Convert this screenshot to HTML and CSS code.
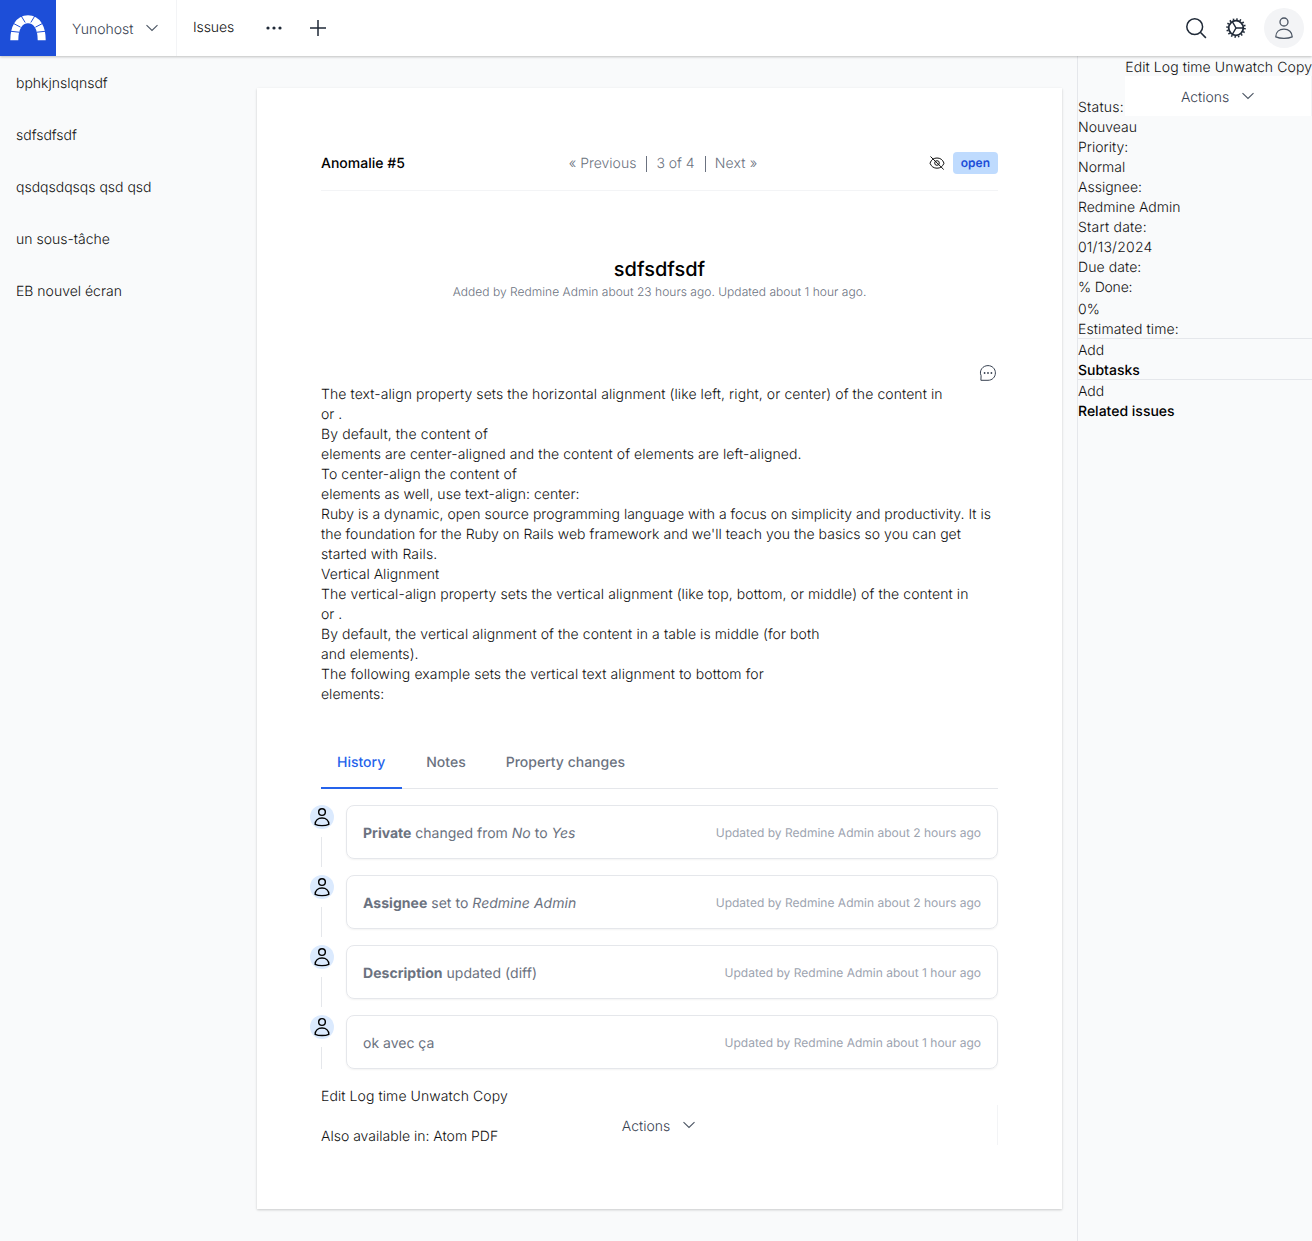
FILE: index.html
```html
<!DOCTYPE html>
<html lang="en">
<head>
<meta charset="utf-8">
<title>Anomalie #5 - Yunohost</title>
<link rel="stylesheet" href="styles.css">
</head>
<body>
<svg class="sprite" aria-hidden="true">
  <symbol id="user" viewBox="0 0 24 24"><circle cx="12" cy="6" r="4"/><path d="M3.800 20.800c0-4.800 3.400-7.600 8.200-7.600s8.200 2.800 8.200 7.600c-2.200 1-5 1.500-8.200 1.500s-6-.5-8.200-1.500z"/></symbol>
  <symbol id="chevron" viewBox="0 0 14 8"><path d="M1.500 1.200 7 6.500l5.500-5.300"/></symbol>
</svg>
<header class="topbar">
  <a class="logo"><svg width="36" height="26" viewBox="0 0 36 26"><path class="arch" d="M4.300 25.200C4.300 13 9 4.300 18 4.300S31.700 13 31.700 25.200"/><path class="joints" d="M0 16.200l9 1M3.200 8.300l7.400 3.900M10.600 0l4.600 7.500M25.400 0l-4.600 7.500M32.800 8.300l-7.400 3.900M36 16.200l-9 1"/></svg></a>
  <a class="project">Yunohost <svg class="chevron"><use href="#chevron"/></svg></a>
  <a class="issues">Issues</a>
  <svg class="dots" width="16" height="4" viewBox="0 0 16 4"><circle cx="2" cy="2" r="1.600"/><circle cx="8" cy="2" r="1.600"/><circle cx="14" cy="2" r="1.600"/></svg>
  <svg class="line-icon plus" width="16" height="16" viewBox="0 0 16 16"><path d="M8 0v16M0 8h16"/></svg>
  <div class="tools">
    <svg class="line-icon" width="22" height="22" viewBox="0 0 22 22"><circle cx="9.700" cy="9.700" r="7.900"/><path d="m15.300 15.300 5.600 5.600"/></svg>
    <svg class="line-icon" width="20" height="20" viewBox="0 0 20 20"><circle class="ring" cx="10" cy="10" r="7.300"/><circle class="teeth" cx="10" cy="10" r="8.900"/><path d="M10 10h7.500M10 10 6.250 3.500M10 10l-3.750 6.500"/></svg>
    <a class="avatar"><svg width="24" height="24"><use href="#user"/></svg></a>
  </div>
</header>
<div class="layout">
  <nav class="issue-list"><a>bphkjnslqnsdf</a><a>sdfsdfsdf</a><a>qsdqsdqsqs qsd qsd</a><a>un sous-tâche</a><a>EB nouvel écran</a></nav>
  <main class="card">
    <div class="card-head">
      <h2>Anomalie #5</h2>
      <div class="pager"><span>« Previous</span><span>3 of 4</span><span>Next »</span></div>
      <div class="state"><svg class="hidden-eye" width="16" height="14" viewBox="0 0 16 14"><path d="M1 7.200C2.300 3.500 4.900 2 8 2s5.700 1.500 7 5.200C13.700 10.700 11.100 12.200 8 12.200S2.300 10.700 1 7.200zM1.500.5l13.200 13"/><circle cx="8" cy="7" r="2.300"/></svg><span class="badge">open</span></div>
    </div>
    <div class="title"><h1>sdfsdfsdf</h1><p>Added by Redmine Admin about 23 hours ago. Updated about 1 hour ago.</p></div>
    <div class="quote"><svg width="18" height="18" viewBox="0 0 18 18"><path class="bubble" d="M1.900 16.300l.2-4.600C-.2 6.600 3.700 1.600 9 1.600c4.200 0 7.400 3.200 7.400 7.300 0 4.200-3.200 7.400-7.400 7.400z"/><circle cx="5.600" cy="9" r=".9"/><circle cx="9" cy="9" r=".9"/><circle cx="12.400" cy="9" r=".9"/></svg></div>
    <div class="description">
      <p class="track-md">The text-align property sets the horizontal alignment (like left, right, or center) of the content in</p>
      <p>or .</p>
      <p class="track-lg">By default, the content of</p>
      <p class="track-md">elements are center-aligned and the content of elements are left-aligned.</p>
      <p class="track-lg">To center-align the content of</p>
      <p class="track-sm">elements as well, use text-align: center:</p>
      <p>Ruby is a dynamic, open source programming language with a focus on simplicity and productivity. It is</p>
      <p class="track-sm">the foundation for the Ruby on Rails web framework and we'll teach you the basics so you can get</p>
      <p class="track-lg">started with Rails.</p>
      <p class="track-sm">Vertical Alignment</p>
      <p class="track-md">The vertical-align property sets the vertical alignment (like top, bottom, or middle) of the content in</p>
      <p>or .</p>
      <p class="track-md">By default, the vertical alignment of the content in a table is middle (for both</p>
      <p class="track-md">and elements).</p>
      <p class="track-lg">The following example sets the vertical text alignment to bottom for</p>
      <p>elements:</p>
    </div>
    <div class="tabs"><a class="tab active">History</a><a class="tab">Notes</a><a class="tab">Property changes</a></div>
    <ol class="history">
      <li><div class="marker"><span><svg width="20" height="24"><use href="#user"/></svg></span></div><div class="entry"><p><b>Private</b> changed from <i>No</i> to <i>Yes</i></p><small>Updated by Redmine Admin about 2 hours ago</small></div></li>
      <li><div class="marker"><span><svg width="20" height="24"><use href="#user"/></svg></span></div><div class="entry"><p class="track-sm"><b>Assignee</b> set to <i>Redmine Admin</i></p><small>Updated by Redmine Admin about 2 hours ago</small></div></li>
      <li><div class="marker"><span><svg width="20" height="24"><use href="#user"/></svg></span></div><div class="entry"><p class="track-sm"><b>Description</b> updated (diff)</p><small>Updated by Redmine Admin about 1 hour ago</small></div></li>
      <li><div class="marker"><span><svg width="20" height="24"><use href="#user"/></svg></span></div><div class="entry"><p>ok avec ça</p><small>Updated by Redmine Admin about 1 hour ago</small></div></li>
    </ol>
    <footer class="card-foot"><div class="foot-links"><p class="track-md">Edit Log time Unwatch Copy</p><p>Also available in: Atom PDF</p></div><a class="actions">Actions <svg class="chevron"><use href="#chevron"/></svg></a></footer>
  </main>
  <aside class="details">
    <div class="detail-head"><span class="track-xl">Status:</span><div class="context"><p class="track-md">Edit Log time Unwatch Copy</p><a class="actions">Actions <svg class="chevron"><use href="#chevron"/></svg></a></div></div>
    <p>Nouveau</p><p>Priority:</p><p>Normal</p><p>Assignee:</p><p>Redmine Admin</p><p class="track-xl">Start date:</p><p class="track-xl">01/13/2024</p><p class="track-md">Due date:</p><p class="track-tight">% Done:</p><p class="progress">0%</p><p class="track-lg">Estimated time:</p>
    <section><p>Add</p><h3>Subtasks</h3></section>
    <section><p>Add</p><h3>Related issues</h3></section>
  </aside>
</div>
</body>
</html>
```
FILE: styles.css
```css
* { box-sizing: border-box; }
body { margin: 0; background: #f9fafb; color: #111; font: 300 14px/20px Inter, sans-serif; text-rendering: geometricPrecision; }
p, h1, h2, h3, ol { margin: 0; padding: 0; list-style: none; }
h1, h2, h3 { font-size: 14px; font-weight: 500; color: #000; }
svg { display: block; flex: none; fill: none; stroke: currentColor; }
.sprite { display: none; }
.chevron { width: 14px; height: 8px; stroke: #4b5563; stroke-width: 1.1; }

.track-tight { letter-spacing: -.2px; }
.track-sm { letter-spacing: .03px; }
.track-md { letter-spacing: .085px; }
.track-lg { letter-spacing: .11px; }
.track-xl { letter-spacing: .22px; }

.topbar { position: relative; display: flex; align-items: center; height: 56px; background: #fff; box-shadow: 0 1px 3px rgba(0,0,0,.12), 0 1px 2px rgba(0,0,0,.12); }
.logo { display: flex; align-items: center; justify-content: center; width: 56px; height: 56px; background: #1d4ed8; }
.arch { stroke: #fff; stroke-width: 8; }
.joints { stroke: #1d4ed8; stroke-width: 1; }
.project { display: flex; align-items: center; justify-content: space-between; width: 121px; height: 56px; padding: 3px 17px 0 16px; border-right: 1px solid #f3f4f6; color: #374151; }
.project .chevron { margin-bottom: 3px; }
.issues { width: 88px; padding: 0 0 1px 16px; letter-spacing: -.1px; }
.dots { margin-left: 1px; fill: #1f2937; stroke: none; }
.line-icon { color: #1f2937; stroke-width: 1.5; }
.plus { margin-left: 28px; }
.tools { display: flex; align-items: center; gap: 19px; margin-left: auto; padding-right: 8px; }
.tools .avatar { margin-left: -1px; }
.avatar { display: flex; align-items: center; justify-content: center; width: 40px; height: 40px; border-radius: 50%; background: #f3f4f6; color: #4b5563; stroke-width: 1.3; }
.ring { stroke-width: 1.8; }
.teeth { stroke-width: 1.8; stroke-dasharray: 1.5 1.995; }

.layout { display: grid; grid-template-columns: 257px 805px 250px; height: 1185px; }
.issue-list { display: flex; flex-direction: column; gap: 32px; padding: 18px 16px; }
.card { height: 1121px; margin-top: 32px; padding: 64px; background: #fff; box-shadow: 0 1px 3px rgba(0,0,0,.1), 0 1px 2px rgba(0,0,0,.1); }
.card-head { display: grid; grid-template-columns: 1fr auto 1fr; align-items: center; height: 39px; padding-bottom: 16px; border-bottom: 1px solid #f3f4f6; }
.card-head h2, .pager { padding-top: 2px; }
.pager { display: flex; align-items: center; margin-right: -8px; color: #6b7280; }
.pager span { line-height: 16px; padding: 0 10px 0 9px; }
.pager span + span { border-left: 1px solid #6b7280; }
.pager span:last-child { letter-spacing: .15px; }
.state { display: flex; align-items: center; justify-content: flex-end; gap: 8px; }
.hidden-eye { stroke-width: 1; }
.badge { height: 22px; padding: 2px 8px; border-radius: 4px; background: #bfdbfe; color: #1d4ed8; font-size: 12px; font-weight: 600; line-height: 18px; }
.title { padding: 64px 0; text-align: center; }
.title h1 { font-size: 20px; line-height: 28px; }
.title p { margin-top: 1px; color: #6b7280; font-size: 12px; line-height: 16px; letter-spacing: .035px; }
.quote { display: flex; justify-content: flex-end; height: 21px; padding-right: 1px; color: #374151; }
.quote circle { fill: #374151; stroke: none; }
.description { white-space: nowrap; }
.tabs { display: flex; height: 53px; margin-top: 31px; border-bottom: 1px solid #e5e7eb; color: #6b7280; font-weight: 500; }
.tab { height: 53px; margin-right: 8px; padding: 17px 16px 0; }
.active { padding-right: 17px; border-bottom: 2px solid #2563eb; color: #2563eb; }
.history { padding-top: 16px; }
.history li { display: flex; height: 70px; }
.history li:last-child { height: 54px; }
.marker { display: flex; flex-direction: column; align-items: center; gap: 8px; width: 24px; margin: 0 12px 0 -11px; }
.marker span { display: flex; justify-content: center; width: 24px; height: 24px; border-radius: 50%; background: #dbeafe; color: #000; stroke-width: 1.7; }
.marker::after { content: ""; width: 1px; height: 30px; margin-right: 1px; background: #e5e7eb; }
.history li:last-child .marker::after { height: 22px; }
.entry { display: flex; flex: 1; align-items: center; justify-content: space-between; height: 54px; padding: 2px 16px 0; border: 1px solid #e5e7eb; border-radius: 8px; box-shadow: 0 1px 2px rgba(0,0,0,.05); color: #6b7280; }
.entry p { padding-top: 2px; font-weight: 400; }
.entry b { font-weight: 700; }
.entry small { color: #9ca3af; font-size: 12px; font-weight: 400; line-height: 16px; letter-spacing: .015px; }
.card-foot { display: grid; height: 78px; padding-top: 18px; }
.foot-links, .card-foot .actions { grid-area: 1 / 1; }
.foot-links { display: flex; flex-direction: column; gap: 20px; }
.card-foot .actions { align-self: end; margin-bottom: 2px; border-right: 1px solid #f3f4f6; }
.actions { display: flex; align-items: center; justify-content: center; gap: 12px; height: 40px; padding-top: 4px; color: #374151; }
.actions .chevron { margin-bottom: 4px; }
.details { margin-left: 15px; padding-top: 2px; border-left: 1px solid #e5e7eb; }
.detail-head { display: flex; align-items: flex-end; justify-content: space-between; height: 60px; }
.detail-head > span { line-height: 20px; white-space: nowrap; }
.context { align-self: flex-start; }
.context .actions { background: #fff; border-right: 1px solid #f3f4f6; }
.context p { height: 18px; white-space: nowrap; }
.progress { padding-top: 2px; }
.details section { margin-top: -2px; padding-top: 2px; border-top: 1px solid #e5e7eb; }
```
